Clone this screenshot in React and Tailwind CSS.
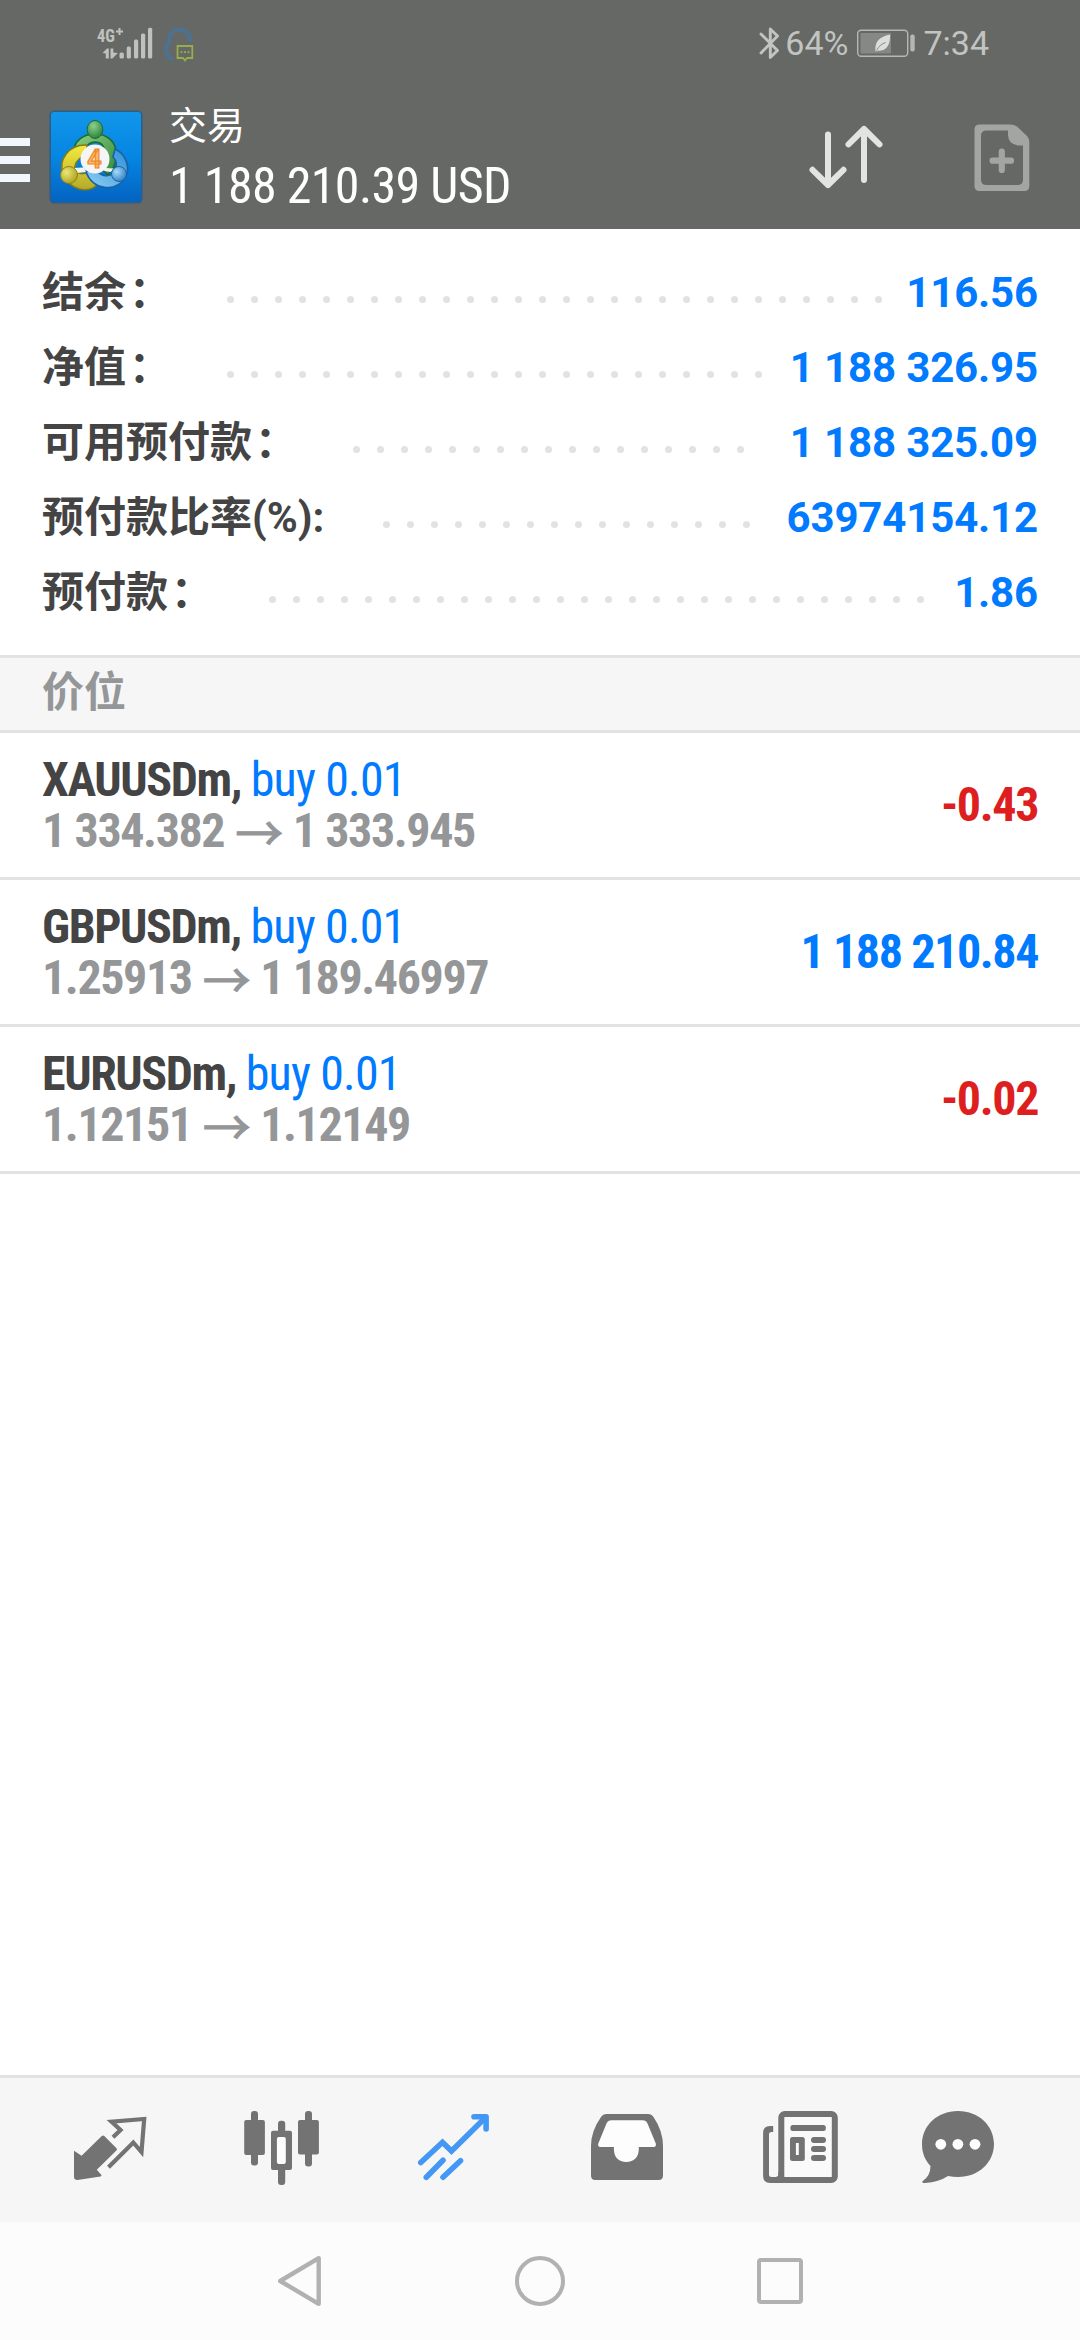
const summary = [
  { label: '结余', colon: '：', dots: 28, value: '116.56' },
  { label: '净值', colon: '：', dots: 23, value: '1 188 326.95' },
  { label: '可用预付款', colon: '：', dots: 17, value: '1 188 325.09' },
  { label: '预付款比率(%):', colon: '', dots: 16, value: '63974154.12' },
  { label: '预付款', colon: '：', dots: 28, value: '1.86' },
];

const positions = [
  { symbol: 'XAUUSDm,', side: 'buy 0.01', open: '1 334.382', now: '1 333.945', profit: '-0.43', gain: false },
  { symbol: 'GBPUSDm,', side: 'buy 0.01', open: '1.25913', now: '1 189.46997', profit: '1 188 210.84', gain: true },
  { symbol: 'EURUSDm,', side: 'buy 0.01', open: '1.12151', now: '1.12149', profit: '-0.02', gain: false },
];

function SignalIcon() {
  return (
    <svg className="h-10 w-[62px]" viewBox="94 22 62 40" fill="#bfc1be">
      <rect x="119.5" y="51.5" width="4.4" height="6" rx="1.5" />
      <rect x="126.7" y="45.5" width="4.2" height="12" rx="1.5" />
      <rect x="134" y="38.5" width="4.2" height="19" rx="1.5" />
      <rect x="141" y="32.5" width="4.2" height="25" rx="1.5" />
      <rect x="148" y="26.8" width="4.2" height="30.7" rx="1.5" />
      <path d="M102.500 52 L107 47.500 H108.800 V57.500 H105.800 V52.500 Z" />
      <path d="M110.500 47.500 H113.300 V51.500 L117.800 52 L112.500 57.500 H110.500 Z" />
      <text x="97" y="41" fontSize="19" fontWeight="700" textLength="18" lengthAdjust="spacingAndGlyphs" className="font-['Roboto_Condensed']">4G</text>
      <path d="M119.500 27 V34 M116 30.500 H123" stroke="#bfc1be" strokeWidth="2" />
    </svg>
  );
}

function MessageIcon() {
  return (
    <svg className="h-10 w-9" viewBox="162 22 36 40" fill="none">
      <path d="M173 59 C163.500 54 165.500 45 169.500 41 C168.500 32 173 28.500 180 28.500 C187 29 190 34 190 41" stroke="#4a7396" strokeWidth="4.5" opacity="0.85" />
      <path d="M177.5 45 H192.3 V57 H187 L185 59.5 L183 57 H177.5 Z" stroke="#93ae4a" strokeWidth="1.8" />
      <path d="M180.5 51.2 H189.5" stroke="#93ae4a" strokeWidth="1.8" strokeDasharray="2 1.5" />
    </svg>
  );
}

function BluetoothIcon() {
  return (
    <svg className="h-9 w-6" viewBox="756 24 24 36" fill="none" stroke="#c2c4c1" strokeWidth="2.900" strokeLinejoin="round" strokeLinecap="round">
      <path d="M760 33 L776.500 49.500 L769.300 56.500 V28 L776.500 35 L760 52" />
    </svg>
  );
}

function BatteryIcon() {
  return (
    <svg className="h-8 w-[60px]" viewBox="855 26.5 60 32">
      <rect x="856.7" y="29.8" width="50" height="26" rx="3.5" fill="none" stroke="#b5b7b4" strokeWidth="1.4" />
      <rect x="859.5" y="32.5" width="30.5" height="20.5" rx="1" fill="#868885" />
      <rect x="909.3" y="34" width="4.4" height="17" rx="1.8" fill="#b5b7b4" />
      <path d="M889 34 C889.5 44 886 50.5 877 50.3 L874.5 51 C873.5 42 877.5 36.5 889 34 Z" fill="#dcdedb" />
      <path d="M875.5 50 C878 45.500 880.500 43.500 884.500 42" stroke="#868885" strokeWidth="1" fill="none" />
    </svg>
  );
}

function AppLogo() {
  return (
    <svg className="h-[94px] w-[94px]" viewBox="0 0 94 94">
      <defs>
        <linearGradient id="sky" x1="0" y1="0" x2="0" y2="1">
          <stop offset="0" stopColor="#1296ea" />
          <stop offset="0.5" stopColor="#0586e2" />
          <stop offset="1" stopColor="#0562c0" />
        </linearGradient>
        <radialGradient id="green" cx="0.4" cy="0.3" r="0.8">
          <stop offset="0" stopColor="#8fd08a" />
          <stop offset="1" stopColor="#1f7a35" />
        </radialGradient>
        <radialGradient id="gold" cx="0.35" cy="0.35" r="0.8">
          <stop offset="0" stopColor="#ece67a" />
          <stop offset="1" stopColor="#a59a12" />
        </radialGradient>
        <radialGradient id="azure" cx="0.35" cy="0.35" r="0.8">
          <stop offset="0" stopColor="#a5daf8" />
          <stop offset="1" stopColor="#1f74bd" />
        </radialGradient>
        <linearGradient id="greenBody" x1="0" y1="0" x2="1" y2="1">
          <stop offset="0" stopColor="#8ed07f" />
          <stop offset="1" stopColor="#2f8a3d" />
        </linearGradient>
        <linearGradient id="goldBody" x1="0" y1="0" x2="0" y2="1">
          <stop offset="0" stopColor="#f4ea3e" />
          <stop offset="1" stopColor="#b5aa2a" />
        </linearGradient>
        <linearGradient id="blueBody" x1="0" y1="1" x2="1" y2="0">
          <stop offset="0" stopColor="#8fd0f5" />
          <stop offset="1" stopColor="#2f8fd6" />
        </linearGradient>
      </defs>
      <rect x="1.200" y="1.200" width="91.600" height="91.600" rx="4" fill="url(#sky)" stroke="#2d5f86" strokeWidth="1.600" />
      <path d="M25 44 C22 18 70 16 67 46 C67 54 64 60 59 65 L52 58 C57 52 58 44 55 38 C52 30 40 30 36 39 Z" fill="url(#greenBody)" stroke="#1d6b2f" strokeWidth="1.600" />
      <path d="M38 35 C20 34 9 50 14 63 C20 80 38 84 48 75 L40 62 C32 66 24 62 26 56 C28 48 34 46 38 45 Z" fill="url(#goldBody)" stroke="#857b12" strokeWidth="1.600" />
      <path d="M66 39 C77 44 82 58 76 68 C66 83 44 80 37 62 L46 58 C52 68 62 68 66 60 C69 54 67 50 64 47 Z" fill="url(#blueBody)" stroke="#1b62a5" strokeWidth="1.600" />
      <path d="M24 58 L35 57.500 L37 62 L28 63 Z M56 58 L65 58.500 L62 62 L55 61 Z" fill="#f0f5ee" />
      <ellipse cx="46" cy="19.500" rx="7.800" ry="9" fill="url(#green)" stroke="#1d6b2f" strokeWidth="1" />
      <circle cx="20" cy="65" r="8.500" fill="url(#gold)" stroke="#8f8411" strokeWidth="1" />
      <circle cx="70" cy="64" r="7.500" fill="url(#azure)" stroke="#1b62a5" strokeWidth="1" />
      <circle cx="46" cy="49" r="14.500" fill="#f5f5f8" />
      <text x="45.500" y="57.500" textAnchor="middle" fontSize="25" fontWeight="700" fill="#fbbb66" stroke="#ee8a2a" strokeWidth="1.200" className="font-['Roboto']">4</text>
    </svg>
  );
}

function SortIcon() {
  return (
    <svg className="h-[72px] w-[84px]" viewBox="804 121 84 72" fill="none" stroke="#e3e4e2" strokeWidth="6" strokeLinecap="round" strokeLinejoin="round">
      <path d="M828 134.500 V185 M812.500 169.800 L828 185 L843.500 169.800" />
      <path d="M864 180 V129 M848.500 144.300 L864 129 L879.500 144.300" />
    </svg>
  );
}

function NewOrderIcon() {
  return (
    <svg className="h-[68px] w-[56px]" viewBox="974 124 56 68">
      <path fillRule="evenodd" fill="#a3a5a2" d="M979.500 124.500 H1011 Q1015 124.500 1017.500 127 L1027 136 Q1029.300 138.500 1029.300 142 V186 Q1029.300 191 1024.300 191 H979.500 Q974.500 191 974.500 186 V129.500 Q974.500 124.500 979.500 124.500 Z M1008 130.500 H986.500 Q981 130.500 981 136 V179.500 Q981 185 986.500 185 H1017.500 Q1023 185 1023 179.500 V145.500 H1018 Q1008 144 1008 134.500 Z" />
      <path d="M1001.800 151.500 V170 M992.600 160.700 H1011" stroke="#a3a5a2" strokeWidth="6.200" strokeLinecap="round" />
    </svg>
  );
}

function QuotesIcon() {
  return (
    <svg className="size-24" viewBox="0 0 96 96">
      <path d="M12 48.700 L19.600 53.700 L39.800 34 Q41 32.800 42.300 34 L54.500 46.200 Q55.500 47.400 54.400 48.500 L34.800 67.700 L39.600 73.200 Q39.400 74 38.500 74.500 L15.500 78 Q12 78 12 75 Z" fill="#737373" />
      <path d="M51 35.200 L58.500 28 L49.500 19.600 L82.200 17 L79.500 50 L71.300 40.500 L46.500 65.300" fill="none" stroke="#737373" strokeWidth="4.200" />
    </svg>
  );
}

function ChartIcon() {
  return (
    <svg className="size-24" viewBox="0 0 96 96" fill="#737373">
      <rect x="17" y="9" width="7" height="54.500" rx="3" />
      <rect x="10.200" y="18" width="20.700" height="35" rx="2" />
      <rect x="71" y="9" width="7" height="55.500" rx="3" />
      <rect x="64" y="18" width="20.900" height="34.500" rx="2" />
      <rect x="44" y="18.700" width="7.200" height="64.300" rx="3" />
      <rect x="37" y="28.700" width="21" height="39.300" rx="2" />
      <rect x="42.900" y="35" width="8.900" height="27" rx="2" fill="#fdfdfd" />
    </svg>
  );
}

function TradeIcon() {
  return (
    <svg className="size-24" viewBox="0 0 96 96" fill="none" stroke="#4498f5" strokeWidth="5.600">
      <path d="M14.800 60.500 L36.500 40.300 L45.500 49 L78 17" strokeLinecap="round" />
      <path d="M68 14.700 H80.100 V27" strokeLinecap="round" strokeLinejoin="round" />
      <path d="M73 14.500 L80.500 15 L80 22 Z" fill="#4498f5" stroke="none" />
      <path d="M20.300 75.200 L37 58.300 M37 75.200 L54.500 58.700" strokeLinecap="round" />
    </svg>
  );
}

function InboxIcon() {
  return (
    <svg className="size-24" viewBox="0 0 96 96">
      <path d="M28.500 12 H70 Q73.500 12 75.500 15 Q85 29 85 44 V73.500 Q85 78 80.500 78 H17.500 Q13 78 13 73.500 V44 Q13 29 23 15 Q25 12 28.500 12 Z" fill="#737373" />
      <path d="M33.500 18.300 H64.500 Q68 18.300 69.500 21.500 L77.800 41.500 Q78.500 45 75.500 45 H60.800 V47 C60.800 55 56 60 48.300 60 C40.500 60 35.900 55 35.900 47 V45 H22.500 Q19.500 45 20.300 41.500 L28.500 21.500 Q30 18.300 33.500 18.300 Z" fill="#fdfdfd" />
    </svg>
  );
}

function NewsIcon() {
  return (
    <svg className="size-24" viewBox="0 0 96 96" fill="#737373">
      <path d="M23.200 24 V30 H21.500 Q19 30 19 32 V73 Q19 75 21.500 75 H26 Q28.300 75 28.300 73 V81 H20 Q13.100 81 13.100 74 V31 Q13.100 24 20 24 Z" />
      <path d="M28.300 70 H34 V81 H24 V75 H26 Q28.300 75 28.300 73 Z" />
      <rect x="31.300" y="12" width="53.500" height="66" rx="3.500" fill="#fafafa" stroke="#737373" strokeWidth="6" />
      <rect x="40.400" y="23" width="35.400" height="6" rx="2.500" />
      <rect x="40" y="35" width="14.800" height="24" rx="2.500" />
      <rect x="45.900" y="41" width="2.900" height="12" fill="#fafafa" />
      <rect x="61" y="35" width="15" height="6" rx="3" />
      <rect x="61" y="44" width="15" height="6" rx="3" />
      <rect x="61" y="53" width="15" height="6" rx="3" />
    </svg>
  );
}

function ChatIcon() {
  return (
    <svg className="size-24" viewBox="0 0 96 96">
      <path d="M36 9 C57 9 72 24 72 42 C72 60 57 75 36 75 Q31 75 26 74 Q17 80 3 81 Q0 81 0.300 79.500 Q8.500 74 8.500 64 C3 58 0 51 0 42 C0 24 15 9 36 9 Z" fill="#737373" />
      <g fill="#fdfdfd">
        <circle cx="18.800" cy="42.300" r="5.400" />
        <circle cx="35.900" cy="42.300" r="5.400" />
        <circle cx="53" cy="42.300" r="5.400" />
      </g>
    </svg>
  );
}

const tabs = [QuotesIcon, ChartIcon, TradeIcon, InboxIcon, NewsIcon, ChatIcon];

export default function App() {
  return (
    <div className="flex h-[2340px] w-[1080px] flex-col overflow-hidden bg-white font-['Roboto','Noto_Sans_CJK_SC',sans-serif]">
      <header className="flex h-[229px] flex-col bg-[#666865]">
        <div className="flex h-[86px] shrink-0 items-center pr-[91px] pl-[94px] text-[34px] leading-none text-[#c2c4c1]">
          <SignalIcon />
          <div className="ml-1.5"><MessageIcon /></div>
          <div className="ml-auto flex items-center">
            <BluetoothIcon />
            <span className="ml-1">64%</span>
            <div className="ml-2"><BatteryIcon /></div>
            <span className="ml-[7px]">7:34</span>
          </div>
        </div>
        <div className="flex h-[143px] items-start">
          <div className="mt-[51.500px] flex w-[30px] flex-col gap-2.5">
            <div className="h-2 bg-[#f1f7fd]" />
            <div className="h-2 bg-[#f1f7fd]" />
            <div className="h-2 bg-[#f1f7fd]" />
          </div>
          <div className="mt-6 ml-[19px]"><AppLogo /></div>
          <div className="mt-4 ml-[26px] flex flex-col gap-1.5 text-white">
            <span className="text-[38px] leading-[48px]">交易</span>
            <span className="font-['Roboto_Condensed'] text-[50px] leading-[60px] tracking-[-0.65px] whitespace-nowrap">1 188 210.39 USD</span>
          </div>
          <div className="mt-[35px] mr-[50px] ml-auto flex gap-[86px]">
            <SortIcon />
            <div className="mt-[3px]"><NewOrderIcon /></div>
          </div>
        </div>
      </header>

      <section className="flex h-[426px] flex-col px-[42px] pt-[26px] text-[42px] leading-[75px] font-bold">
        {summary.map((row) => (
          <div key={row.label} className="flex h-[75px] whitespace-nowrap">
            <div className="shrink-0 text-[#444444]">
              {row.label}
              {row.colon && <span className="-mr-[3px] ml-[3px]">{row.colon}</span>}
            </div>
            <div className="ml-[50px] flex pt-[7px]">
              {Array.from({ length: row.dots }, (_, i) => (
                <span key={i} className="flex w-6 items-center justify-center">
                  <i className="mt-[7px] size-[7px] rounded-full bg-[#e2e2e2]" />
                </span>
              ))}
            </div>
            <span className="ml-auto tracking-[-0.15px] text-[#007aff]">{row.value}</span>
          </div>
        ))}
      </section>

      <h2 className="h-[78px] border-y-[3px] border-[#e2e2e2] bg-[#f6f6f6] px-[42px] text-[42px] leading-[69px] font-bold text-[#959698]">
        价位
      </h2>

      <main className="flex-1 font-['Roboto_Condensed','Noto_Sans_CJK_SC',sans-serif] text-[48px] leading-[51px] font-bold tracking-[-1.4px]">
        {positions.map((p) => (
          <div key={p.symbol} className="flex h-[147px] items-start justify-between border-b-[3px] border-[#e2e2e2] pt-[21px] pr-[42px] pl-[42px]">
            <div className="flex flex-col">
              <div className="whitespace-nowrap text-[#444444]">
                {p.symbol} <span className="font-normal tracking-[-0.85px] text-[#007aff]">{p.side}</span>
              </div>
              <div className="flex text-[#959698]">
                {p.open}
                <span className="mr-[9.500px] ml-[11px] font-['Noto_Sans_CJK_SC'] font-normal tracking-normal [-webkit-text-stroke:1px_#959698]">→</span>
                {p.now}
              </div>
            </div>
            <span className={p.gain ? 'mt-[25px] text-[#007aff]' : 'mt-[25px] text-[#dd1f1f]'}>{p.profit}</span>
          </div>
        ))}
      </main>

      <nav className="flex h-[147px] shrink-0 items-center border-t-[3px] border-[#e2e2e2] bg-[#f6f6f6] px-6">
        {tabs.map((Icon, i) => (
          <button key={i} className="flex w-[172px] justify-center">
            <Icon />
          </button>
        ))}
      </nav>

      <footer className="flex h-[118px] shrink-0 items-center bg-[#fcfcfc] px-[180px]">
        <div className="flex w-60 justify-center">
          <svg className="size-[54px]" viewBox="0 0 54 54" fill="none" stroke="#b1b1b1" strokeWidth="4.400" strokeLinejoin="round">
            <path d="M45.700 4.200 V49.800 L7.200 27 Z" />
          </svg>
        </div>
        <div className="flex w-60 justify-center">
          <div className="size-[50px] rounded-full border-[4.500px] border-[#b1b1b1]" />
        </div>
        <div className="flex w-60 justify-center">
          <div className="size-[46px] rounded-[4px] border-[4px] border-[#b1b1b1]" />
        </div>
      </footer>
    </div>
  );
}
